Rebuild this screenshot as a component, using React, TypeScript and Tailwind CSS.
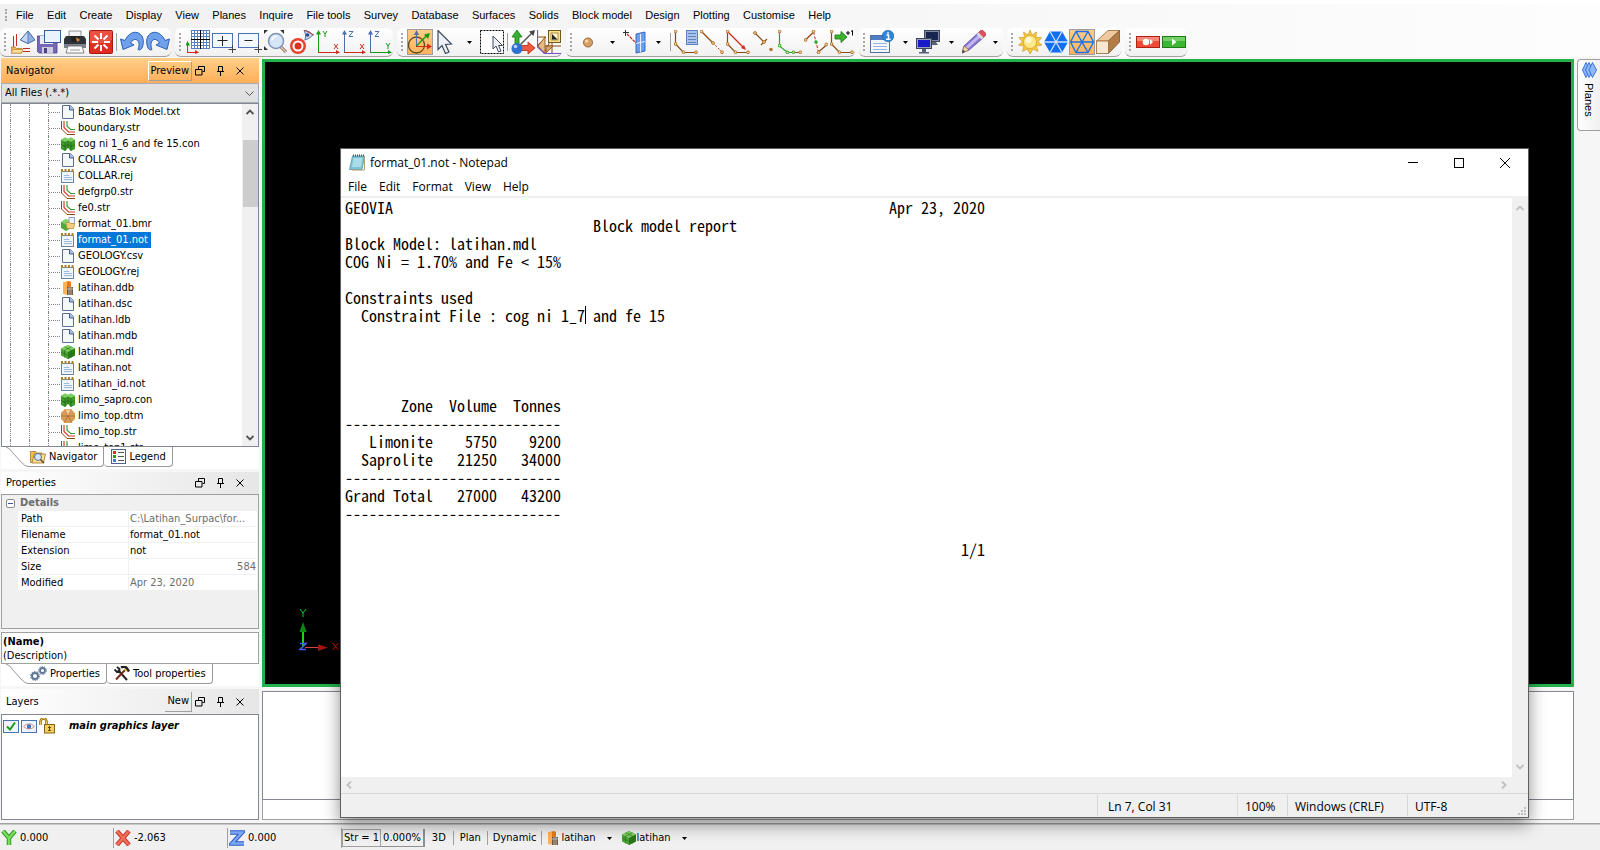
import { useState } from 'react';
import type { ReactNode } from 'react';
import { clsx } from 'clsx';

/* ------------------------------------------------------------------ */
/* Toolbar icons, 24x24                                                */
/* ------------------------------------------------------------------ */

const BROWN = '#8a4b12';

function Dot({ x, y, color = '#b8732c' }: { x: number; y: number; color?: string }) {
  return <circle cx={x} cy={y} r={1.4} fill="#f3d2a4" stroke={color} strokeWidth={1} />;
}

function Axes({ up, right, upColor, rightColor }: { up: string; right: string; upColor: string; rightColor: string }) {
  return (
    <>
      <path d="M2.5 22.500V2" stroke={upColor} fill="none" />
      <path d="M0 4.500L2.500 0L5 4.500z" fill={upColor} />
      <path d="M2 22.500H22" stroke={rightColor} fill="none" />
      <path d="M20 20L24 22.500L20 24z" fill={rightColor} />
      {up === 'Y' ? (
        <path d="M7 1l2 3l2-3M9 4v3" stroke={upColor} fill="none" />
      ) : (
        <path d="M7 1.500h4l-4 5h4" stroke={upColor} fill="none" />
      )}
      {right === 'X' ? (
        <path d="M18 14l4 5M22 14l-4 5" stroke={rightColor} fill="none" />
      ) : (
        <path d="M18 13l2 3l2-3M20 16v3" stroke={rightColor} fill="none" />
      )}
    </>
  );
}

const icons: Record<string, ReactNode> = {
  open: (
    <>
      <path d="M2.500 6v11M5.500 4v12" stroke="#c03020" />
      <path d="M12 18.500h7M12 21.500h7" stroke="#c03020" />
      <path d="M0 17h4l1.500 1.500H11V23H0z" fill="#e9b44a" stroke="#b97f1e" strokeWidth={0.800} />
      <path d="M2 19.500h10L10 23H0z" fill="#ffe09a" stroke="#c08a28" strokeWidth={0.700} />
      <path d="M17 1l7 9l-7 3.500L9.500 10z" fill="#8fb0e0" stroke="#39609f" strokeWidth={0.900} />
      <path d="M17 1v12.500L9.500 10z" fill="#c6d8f3" stroke="#39609f" strokeWidth={0.700} />
    </>
  ),
  save: (
    <>
      <path d="M0 6h18l2 2v15H2l-2-2z" fill="#7768b4" stroke="#51438c" strokeWidth={0.800} />
      <rect x={3} y={6} width={13} height={8} fill="#eceaf6" />
      <rect x={5} y={17} width={11} height={6.500} fill="#cfcbe2" />
      <rect x={7} y={18} width={3} height={5} fill="#4d4380" />
      <rect x={7.500} y={0.500} width={16} height={12} fill="#eaf3fc" stroke="#3a5c9c" />
    </>
  ),
  print: (
    <>
      <path d="M6 1h12v8H6z" fill="#f4f4f4" stroke="#777" strokeWidth={0.800} />
      <path d="M3 6h18l2 3v8H1V9z" fill="#30343a" />
      <path d="M1 14h22v4H1z" fill="#7a828c" />
      <path d="M7 6h10l-2 6H9z" fill="#222" />
      <path d="M13 7l4 3l-3 2z" fill="#e08a3c" />
      <path d="M5 16h14l2 7H3z" fill="#fafafa" stroke="#666" strokeWidth={0.800} />
      <path d="M7 20h10" stroke="#999" />
    </>
  ),
  stop: (
    <>
      <rect x={0.500} y={0.500} width={23} height={23} rx={1} fill="#e02d1e" stroke="#a51a10" />
      <path d="M1 1h22v9q-11 5-22 3z" fill="#f2685a" opacity={0.600} />
      <path
        d="M12 3v6M12 15v6M3 12h6M15 12h6M5.500 5.500l4 4M14.500 14.500l4 4M18.500 5.500l-4 4M9.500 14.500l-4 4"
        stroke="#fff"
        strokeWidth={2}
      />
    </>
  ),
  undo: (
    <path
      d="M0.500 9l4.500 1.500C8 4 13 1.500 17 2.500c6 1.500 8 8.500 5 15.500c-1.500 2-3 2.500-4 1.500c2-5 1-9-2-10c-2-.500-4 1-5.500 3.500L14 15L3 19.500z"
      fill="#6fa0ea"
      stroke="#2c62b8"
    />
  ),
  redo: (
    <path
      d="M23.500 9l-4.500 1.500C16 4 11 1.500 7 2.500c-6 1.500-8 8.500-5 15.500c1.500 2 3 2.500 4 1.500c-2-5-1-9 2-10c2-.500 4 1 5.500 3.500L10 15l11 4.500z"
      fill="#6fa0ea"
      stroke="#2c62b8"
    />
  ),
  grid: (
    <>
      <rect x={5.500} y={0.500} width={18} height={18} fill="#fff" />
      <path
        d="M5.500 0v19M8.500 0v19M11.500 0v19M17.500 0v19M20.500 0v19M23.500 0v19M5 .500h19M5 3.500h19M5 6.500h19M5 12.500h19M5 15.500h19M5 18.500h19"
        stroke="#5a7fc0"
      />
      <path d="M14.500 0v19M5 9.500h19" stroke="#000" />
      <path d="M1.500 22.500V13" stroke="#119a11" />
      <path d="M-.500 15.500L1.500 11L4 15.500z" fill="#119a11" />
      <path d="M1 22.500h9" stroke="#d42a1a" />
      <path d="M9 20L13 22.500L9 24z" fill="#d42a1a" />
    </>
  ),
  zoomIn: (
    <>
      <rect x={0.500} y={3.500} width={20} height={14} fill="#f3f8fd" stroke="#4a73b4" />
      <path d="M10.500 6v10M5.500 10.500h10" stroke="#222" />
      <path d="M20.500 15v8M16.500 19.500h8" stroke="#444" />
    </>
  ),
  zoomOut: (
    <>
      <rect x={0.500} y={3.500} width={20} height={14} fill="#f3f8fd" stroke="#4a73b4" />
      <path d="M6.500 10.500h8" stroke="#222" />
      <path d="M20.500 15v8M16.500 19.500h8" stroke="#444" />
    </>
  ),
  zoomAll: (
    <>
      <path d="M16 16l6 6" stroke="#8a5a3a" strokeWidth={3} />
      <path d="M16 16l6 6" stroke="#d8d0cc" strokeWidth={1.500} />
      <circle cx={12} cy={11} r={7.500} fill="#d5e6f8" stroke="#7e93b4" strokeWidth={1.500} />
      <path d="M8 10q1-4 5-4" stroke="#fff" strokeWidth={1.500} fill="none" />
      <path d="M0 0h4L0 4zM20 0v4L16 0zM0 20v-4l4 4z" fill="#333" />
    </>
  ),
  target: (
    <>
      <circle cx={8} cy={16} r={8} fill="#e8432e" />
      <circle cx={8} cy={16} r={5.500} fill="#fff" />
      <circle cx={8} cy={16} r={3.500} fill="#e0301c" />
      <path d="M14 0Q20 1 23 5Q19 9 15 10Q17 5 14 0z" fill="#c9dcf4" stroke="#54729f" />
      <path d="M14 0l10 5" stroke="#c0392b" />
      <circle cx={17.500} cy={5} r={1.800} fill="#274b8f" />
    </>
  ),
  axesXY: <Axes up="Y" right="X" upColor="#159a15" rightColor="#cc2a1c" />,
  axesXZ: <Axes up="Z" right="X" upColor="#4a6fae" rightColor="#cc2a1c" />,
  axesYZ: <Axes up="Z" right="Y" upColor="#4a6fae" rightColor="#159a15" />,
  orbit: (
    <>
      <circle cx={8.500} cy={15} r={8} fill="none" stroke="#5b4a20" strokeWidth={1.300} />
      <path d="M8.500 16V2" stroke="#4a6fae" />
      <path d="M6 5l2.500-5L11 5z" fill="#4a6fae" />
      <path d="M8.500 16L19 5" stroke="#159a15" strokeWidth={1.300} />
      <path d="M16 4.500L22 3l-2 6z" fill="#159a15" />
      <path d="M8 16.500h12" stroke="#d42a1a" />
      <path d="M19 13.500l5 3l-5 3z" fill="#d42a1a" />
    </>
  ),
  pointer: <path d="M4 .500v19l4-4l3.500 8l3.500-1.500l-3.500-7.500l6-.500z" fill="#eef1f6" stroke="#3d4a60" strokeWidth={1.200} />,
  select: (
    <>
      <rect x={0.500} y={0.500} width={23} height={23} fill="#fff" stroke="#000" strokeDasharray="2 1" />
      <path d="M13 6v13l3-3l2.500 6l2.500-1l-2.500-5.500h4z" fill="#eef1f6" stroke="#3d4a60" />
    </>
  ),
  move3d: (
    <>
      <path d="M8 16L21 3" stroke="#555" strokeWidth={1.500} />
      <path d="M18 1.500L24 0l-1.500 6z" fill="#444" />
      <path d="M4 15V7H1l5-7l5 7H8v8z" fill="#35b02c" stroke="#1a7a14" strokeWidth={0.800} />
      <path d="M9 15.500h8v-3.500l7 6l-7 6V20.500H9z" fill="#f05a3c" stroke="#b02a14" strokeWidth={0.800} />
      <circle cx={6} cy={18.500} r={5.500} fill="#2f6fd0" />
      <circle cx={4.500} cy={16.500} r={1.800} fill="#b8d4fa" />
    </>
  ),
  planeEdit: (
    <>
      <path d="M0 7h9l-9 9zM7 23.500l8-16M0 16h24M15 12v11.500" stroke="#8a4b12" fill="none" />
      <path d="M1 16l7-9v16.500z" fill="#e6b988" stroke={BROWN} strokeWidth={0.800} />
      <path d="M9 16h7l-7 7z" fill="#d9a46c" stroke={BROWN} strokeWidth={0.800} />
      <path d="M.500 0v17l7 6.500H24" stroke="#7a4ed0" strokeWidth={1.200} fill="none" />
      <rect x={11.500} y={0.500} width={12} height={12} fill="#fbe08a" stroke="#6b5a1c" />
      <rect x={14} y={3} width={7} height={7} fill="#fff3c4" stroke="#6b5a1c" strokeWidth={0.600} />
      <path d="M15 4v5.500h5.500z" fill="#222" />
    </>
  ),
  point: (
    <>
      <circle cx={11} cy={12.500} r={4.500} fill="#d9a066" stroke="#9a6430" />
      <circle cx={9.500} cy={11} r={1.600} fill="#f7dcb8" />
    </>
  ),
  digitise: (
    <>
      <path d="M0 2.500h6M2.500 0v6" stroke="#333" />
      <path d="M4 4L14 14" stroke="#cc2a1c" strokeWidth={1.300} strokeDasharray="3 1" />
      <path d="M13 4l9-2v19l-9 2z" fill="#6a9ff0" stroke="#2b60c0" strokeWidth={0.900} />
      <path d="M17.500 4v18M13 13.500l9-2" stroke="#e8f1ff" />
    </>
  ),
  segList: (
    <>
      <path d="M1.500 2v12l8 8.500h12" stroke={BROWN} strokeWidth={1.200} fill="none" />
      <Dot x={1.500} y={1.500} />
      <Dot x={1.500} y={14} />
      <Dot x={9.500} y={22.300} />
      <Dot x={22} y={22.300} />
      <rect x={12.500} y={0.500} width={11} height={14} fill="#a9c3ee" stroke="#5d80c0" />
      <path d="M14 3.500h8M14 6.500h8M14 9.500h8M14 12.500h8" stroke="#45679f" strokeWidth={0.700} />
    </>
  ),
  segExtend: (
    <>
      <path d="M1.500 1.500L13 13" stroke={BROWN} strokeWidth={1.200} />
      <path d="M13 13l9 9" stroke="#cc2a1c" strokeDasharray="2 1.500" />
      <Dot x={1.500} y={1.500} />
      <Dot x={13} y={13} />
      <Dot x={22} y={22.300} />
    </>
  ),
  segClose: (
    <>
      <path d="M1.500 2v12l8 8.500h13" stroke={BROWN} strokeWidth={1.200} fill="none" />
      <path d="M2 2l16 16" stroke="#d42a1a" strokeWidth={1.200} />
      <path d="M20 20l-5-2l3-3z" fill="#d42a1a" />
      <Dot x={1.500} y={1.500} />
      <Dot x={1.500} y={14} />
      <Dot x={9.500} y={22.300} />
      <Dot x={22} y={22.300} />
    </>
  ),
  segBreak: (
    <>
      <path d="M3 3l9 9M9 15l6-6" stroke={BROWN} strokeWidth={1.200} />
      <Dot x={3} y={3} />
      <Dot x={12} y={12} />
      <circle cx={19} cy={19.500} r={1.800} fill="#b8732c" />
    </>
  ),
  segInsert: (
    <>
      <path d="M1.500 2v14l8 6.500h6" stroke="#27a52a" strokeWidth={1.200} fill="none" />
      <path d="M15 22.500h7" stroke={BROWN} />
      <Dot x={1.500} y={1.500} color="#b8732c" />
      <Dot x={1.500} y={15.500} color="#27a52a" />
      <Dot x={9.500} y={22.300} color="#27a52a" />
      <Dot x={15.500} y={22.300} color="#27a52a" />
      <Dot x={22.300} y={22.300} />
    </>
  ),
  segMove: (
    <>
      <path d="M1.500 10l8-8M14.500 22l8-7" stroke={BROWN} strokeWidth={1.200} />
      <path d="M9.500 2l5 20" stroke="#d42a1a" strokeDasharray="3 1.500" />
      <Dot x={1.500} y={10} />
      <Dot x={9.500} y={1.500} />
      <Dot x={14.500} y={22.300} />
      <Dot x={22.300} y={14.500} />
      <circle cx={12} cy={12} r={1.700} fill="#27a52a" />
    </>
  ),
  segNext: (
    <>
      <path d="M1.500 2v12l8 8.500h13" stroke={BROWN} strokeWidth={1.200} fill="none" />
      <Dot x={1.500} y={1.500} />
      <Dot x={1.500} y={14} />
      <Dot x={9.500} y={22.300} />
      <Dot x={22} y={22.300} />
      <path d="M5 5h6V1.500L17 7l-6 5.500V9H5z" fill="#3cb42f" stroke="#1f7c18" strokeWidth={0.900} />
      <path d="M16 3h4M18 1v4M21 1.500l1.500-1v5" stroke="#000" fill="none" />
    </>
  ),
  info: (
    <>
      <rect x={0.500} y={5.500} width={19} height={17} fill="#f5f9fe" stroke="#52719f" />
      <rect x={1} y={6} width={18} height={4} fill="#4f7cc4" />
      <path d="M3 13.500h14M3 16.500h14M3 19.500h14" stroke="#9bb4d8" />
      <circle cx={18} cy={6} r={5.800} fill="#2b86d8" stroke="#1a5ca0" strokeWidth={0.600} />
      <path d="M16.500 5h2v4M16 9.200h4.500M18 2v1.800" stroke="#fff" strokeWidth={1.400} fill="none" />
    </>
  ),
  monitors: (
    <>
      <rect x={8.500} y={0.500} width={15} height={11} fill="#8089a0" stroke="#3d4560" />
      <rect x={10} y={2} width={12} height={8} fill="#1a2450" />
      <path d="M15 12h5l2 3h-8z" fill="#59617a" />
      <rect x={0.500} y={8.500} width={15} height={10} fill="#9aa2b8" stroke="#3d4560" />
      <rect x={2} y={10} width={12} height={7} fill="#1a1ac8" />
      <path d="M6 19h4v3h3v1.500H3V22h3z" fill="#59617a" />
    </>
  ),
  pencil: (
    <>
      <path d="M0 23l2-7L16 3l5 5L7 20z" fill="#8f7ad8" stroke="#4d3d92" strokeWidth={0.800} />
      <path d="M3.500 17L17 4.500l2 2L6 18.500z" fill="#c4b8f2" />
      <path d="M0 23l2-7l5 4z" fill="#f2d6a6" stroke="#8a6a3a" strokeWidth={0.600} />
      <path d="M0 23l1-3l2 1.500z" fill="#333" />
      <path d="M16 3l2.500-2.500h2.500L24 3.500V5l-3 3z" fill="#e0505c" stroke="#a02a38" strokeWidth={0.600} />
      <path d="M14.500 4.500L16.500 2.500l5 5l-2 2z" fill="#d8d8e0" />
    </>
  ),
  sun: (
    <>
      <path
        d="M12 0l2 5l4.500-3l-.500 5.500l5.500 0l-3.500 4.500l4 3l-5.500 1l1.500 5.500l-5-2.500L12 24l-2.500-5l-5 2.500L6 16L.500 15l4-3L1 7.500h5.500L5.500 2l4.500 3z"
        fill="#f5c93c"
        stroke="#c79418"
        strokeWidth={0.600}
      />
      <circle cx={12} cy={12} r={6.500} fill="#ffe98c" stroke="#d6a527" strokeWidth={0.800} />
      <circle cx={10.500} cy={10} r={3} fill="#fff8d8" />
    </>
  ),
  hexSolid: (
    <>
      <path d="M6 1.500h12l6 10.500l-6 10.500H6L0 12z" fill="#0f6ff0" />
      <path d="M0 12h24M6 1.500l12 21M18 1.500l-12 21" stroke="#cfe2ff" strokeWidth={1.300} />
    </>
  ),
  hexWire: (
    <path
      d="M6 1.500h12l5.500 10.500l-5.500 10.500H6L.500 12zM.500 12h23M6 1.500l12 21M18 1.500l-12 21"
      fill="none"
      stroke="#1a72ea"
      strokeWidth={1.400}
    />
  ),
  box3d: (
    <>
      <path d="M.500 11L12 .500h11.500L12.500 11z" fill="#ecc99e" stroke="#9b6a38" strokeWidth={0.800} />
      <path d="M12.500 11L23.500 .500V12L12.500 23.500z" fill="#b37c45" stroke="#7d5226" strokeWidth={0.800} />
      <rect x={0.500} y={11} width={12} height={12.500} fill="#f7e6d2" stroke="#9b6a38" strokeWidth={0.800} />
    </>
  ),
  record: (
    <>
      <rect x={0.500} y={6.500} width={23} height={11} fill="#ee4a35" stroke="#b02014" />
      <rect x={1} y={7} width={22} height={4} fill="#f58a78" />
      <circle cx={10} cy={12} r={3.300} fill="#fff" />
      <path d="M14 9l3 3l-3 3z" fill="#fff" />
    </>
  ),
  play: (
    <>
      <rect x={0.500} y={6.500} width={23} height={11} fill="#3fb534" stroke="#1f7c18" />
      <rect x={1} y={7} width={22} height={4} fill="#74d066" />
      <path d="M10 8.500l4.500 3.500l-4.500 3.500z" fill="#fff" />
    </>
  ),
};

/* ------------------------------------------------------------------ */
/* File icons, 14x14                                                   */
/* ------------------------------------------------------------------ */

const fileIcons: Record<string, ReactNode> = {
  doc: (
    <>
      <path d="M1.500 .500h8l3 3.500v9.500h-11z" fill="#f4f8fd" stroke="#5a6f92" />
      <path d="M8.500 .500V5h4" fill="#9fb9df" stroke="#44618f" />
    </>
  ),
  str: (
    <>
      <path d="M.500 0v8l5.500 5.500h8" stroke="#8a4b12" fill="none" />
      <path d="M3 0v6.500l4.500 4.500H14" stroke="#d43a2a" strokeWidth={1.200} fill="none" />
      <path d="M6 0v5l3.500 3.500H14" stroke="#35a035" strokeWidth={1.200} fill="none" />
    </>
  ),
  con: (
    <>
      <path d="M0 3l4-2.500L7 2l3-1.500L14 3v9l-4 2l-3-3l-3 3l-4-2z" fill="#3f9a2c" />
      <path d="M0 3l4-2.500L7 2l3-1.500L14 3l-4 1.800L7 3.500L4 4.800z" fill="#7fd062" />
      <path d="M4 5v9M10 5v9M7 4v7M0 7.500l4 2l3-2l3 2l4-2" stroke="#22661a" strokeWidth={0.800} fill="none" />
    </>
  ),
  note: (
    <>
      <rect x={0.500} y={2.500} width={12} height={11} fill="#eef4fb" stroke="#6c84a8" />
      <path d="M0 1.500h13" stroke="#a8842c" strokeWidth={3} strokeDasharray="2 1.500" />
      <path d="M3 6.500h5M3 8.500h8M3 10.500h8" stroke="#a3b9dc" />
    </>
  ),
  bmr: (
    <>
      <path d="M0 5l5-3l5 3v6l-5 3l-5-3z" fill="#4fa83a" />
      <path d="M0 5l5-3l5 3l-5 2.500z" fill="#86d36c" />
      <rect x={8} y={0.500} width={5.500} height={6} fill="#eef4fb" stroke="#7890b4" strokeWidth={0.800} />
      <path d="M5 5.500h3.500l1 1H14l-1.500 5H6z" fill="#f2cf7c" stroke="#b98c34" strokeWidth={0.700} />
    </>
  ),
  ddb: (
    <>
      <path d="M2 1.500l6-1.500l2 1v11l-6 1.500l-2-1z" fill="#e87818" />
      <path d="M2 1.500l4-1v12L4 13.500l-2-1z" fill="#ffb254" />
      <rect x={6} y={6} width={6} height={8} fill="#6b5a4a" />
      <path d="M8 6v8M10 6v8M6 8h6" stroke="#d4c4b0" strokeWidth={0.800} />
    </>
  ),
  mdl: (
    <>
      <path d="M0 3.500L7 0l7 3.500v7L7 14L0 10.500z" fill="#4aa535" />
      <path d="M0 3.500L7 0l7 3.500L7 7z" fill="#7fd062" />
      <path d="M7 7l7-3.500v7L7 14z" fill="#2b7a1e" />
      <path d="M0 7l7 3.500L14 7M3.500 5v7.500M10.500 5v7.500M3.500 1.800l7 3.500M10.500 1.800l-7 3.500" stroke="#256b1a" strokeWidth={0.600} fill="none" />
    </>
  ),
  dtm: (
    <>
      <path d="M4 0h6l4 4v6l-4 4H4l-4-4V4z" fill="#d99a56" />
      <path d="M4 0l3 7l3-7M0 7h14M3 14l4-7l4 7" stroke="#9a602a" strokeWidth={0.600} fill="none" />
      <path d="M4 .500l3 6l3-6z" fill="#f0c896" />
    </>
  ),
};

function FileIcon({ name, className }: { name: string; className?: string }) {
  return (
    <svg viewBox="0 0 14 14" className={clsx('size-3.5 shrink-0', className)} aria-hidden>
      {fileIcons[name]}
    </svg>
  );
}

/* ------------------------------------------------------------------ */
/* Data                                                                */
/* ------------------------------------------------------------------ */

const menus = [
  'File', 'Edit', 'Create', 'Display', 'View', 'Planes', 'Inquire', 'File tools', 'Survey',
  'Database', 'Surfaces', 'Solids', 'Block model', 'Design', 'Plotting', 'Customise', 'Help',
];

// '|' is a separator, 'v' a drop-down arrow; everything else is an icon name.
const toolbars: string[][] = [
  ['open', 'save', 'print', 'stop', '|', 'undo', 'redo'],
  ['grid', 'zoomIn', 'zoomOut', 'zoomAll', 'target', 'axesXY', 'axesXZ', 'axesYZ'],
  ['orbit', 'pointer', 'v', 'select', '|', 'move3d', 'planeEdit'],
  ['point', 'v', 'digitise', 'v', '|', 'segList', 'segExtend', 'segClose', 'segBreak', 'segInsert', 'segMove', 'segNext'],
  ['info', 'v', 'monitors', 'v', 'pencil', 'v'],
  ['sun', 'hexSolid', 'hexWire', 'box3d'],
  ['record', 'play'],
];

const activeTools = ['orbit', 'hexWire'];

const files: [string, string][] = [
  ['doc', 'Batas Blok Model.txt'],
  ['str', 'boundary.str'],
  ['con', 'cog ni 1_6 and fe 15.con'],
  ['doc', 'COLLAR.csv'],
  ['note', 'COLLAR.rej'],
  ['str', 'defgrp0.str'],
  ['str', 'fe0.str'],
  ['bmr', 'format_01.bmr'],
  ['note', 'format_01.not'],
  ['doc', 'GEOLOGY.csv'],
  ['note', 'GEOLOGY.rej'],
  ['ddb', 'latihan.ddb'],
  ['doc', 'latihan.dsc'],
  ['doc', 'latihan.ldb'],
  ['doc', 'latihan.mdb'],
  ['mdl', 'latihan.mdl'],
  ['note', 'latihan.not'],
  ['note', 'latihan_id.not'],
  ['con', 'limo_sapro.con'],
  ['dtm', 'limo_top.dtm'],
  ['str', 'limo_top.str'],
  ['str', 'limo_top1.str'],
];

const properties = [
  { name: 'Path', value: 'C:\\Latihan_Surpac\\for...', muted: true },
  { name: 'Filename', value: 'format_01.not' },
  { name: 'Extension', value: 'not' },
  { name: 'Size', value: '584', muted: true, right: true },
  { name: 'Modified', value: 'Apr 23, 2020', muted: true },
];

const RULE = '-'.repeat(27);

const report = [
  'GEOVIA' + ' '.repeat(62) + 'Apr 23, 2020',
  ' '.repeat(31) + 'Block model report',
  'Block Model: latihan.mdl',
  'COG Ni = 1.70% and Fe < 15%',
  '',
  'Constraints used',
  '  Constraint File : cog ni 1_7 and fe 15',
  '',
  '',
  '',
  '',
  '       Zone  Volume  Tonnes',
  RULE,
  '   Limonite    5750    9200',
  '  Saprolite   21250   34000',
  RULE,
  'Grand Total   27000   43200',
  RULE,
  '',
  ' '.repeat(77) + '1/1',
].join('\n');

/* ------------------------------------------------------------------ */
/* Top bars                                                            */
/* ------------------------------------------------------------------ */

function Grip({ className }: { className?: string }) {
  return <span className={clsx('w-0.5 shrink-0 border-l-2 border-dotted border-[#a8a8a8]', className)} />;
}

function MenuBar() {
  return (
    <nav className="mt-1 flex h-6 items-center bg-linear-to-r from-[#f0f0f0] to-[#fdfdfd] pb-0.5 pl-[5px] font-['Liberation_Sans',sans-serif] text-[11px]">
      <Grip className="h-3" />
      <div className="ml-[9px] flex w-[815px] items-center justify-between">
        {menus.map((m) => (
          <button key={m} type="button" className="whitespace-nowrap">
            {m}
          </button>
        ))}
      </div>
    </nav>
  );
}

function ToolBars() {
  return (
    <div className="flex h-[29px] items-start gap-1 overflow-hidden bg-linear-to-r from-[#f0f0f0] to-[#fdfdfd]">
      {toolbars.map((items) => (
        <div
          key={items[0]}
          className="flex h-[29px] shrink-0 items-center rounded-md border-b border-[#a0a0a0] bg-linear-to-b from-white to-[#f1f1f1] pl-1"
        >
          <Grip className="mr-1 h-[18px]" />
          {items.map((item, i) => {
            if (item === '|') return <span key={i} className="mx-0.5 h-[18px] w-px bg-[#a0a0a0]" />;
            if (item === 'v') {
              return (
                <button key={i} type="button" aria-label="More" className="flex h-[26px] w-5 items-center justify-center last:w-4">
                  <svg viewBox="0 0 5 3" className="h-[3px] w-[5px]">
                    <path d="M0 0h5L2.500 3z" />
                  </svg>
                </button>
              );
            }
            return (
              <button
                key={i}
                type="button"
                aria-label={item}
                className={clsx(
                  'flex size-[26px] items-center justify-center',
                  activeTools.includes(item) && 'border border-[#9d9d9d] bg-linear-to-b from-[#ffcd85] to-[#ffb25e]',
                )}
              >
                <svg viewBox="0 0 24 24" className="size-6 shrink-0">
                  {icons[item]}
                </svg>
              </button>
            );
          })}
        </div>
      ))}
    </div>
  );
}

/* ------------------------------------------------------------------ */
/* Left dock                                                           */
/* ------------------------------------------------------------------ */

function PanelHeader({ title, action, active, className }: { title: string; action?: string; active?: boolean; className: string }) {
  return (
    <header
      className={clsx(
        'flex shrink-0 items-center pr-[15px] pl-[5px]',
        active ? 'bg-linear-to-b from-[#ffcf88] to-[#ffae58]' : 'bg-linear-to-r from-white to-[#e6e6e6]',
        className,
      )}
    >
      <h2 className="flex-1">{title}</h2>
      {action && (
        <button
          type="button"
          className={clsx('h-5 border-r border-b border-[#a0a0a0] px-0.5', active && 'border-t border-l border-t-white border-l-white')}
        >
          {action}
        </button>
      )}
      <button type="button" aria-label="Float" className="ml-[3px]">
        <svg viewBox="0 0 10 10" className="size-2.5" fill="none" stroke="#000">
          <path d="M3.500 3V.500h6v5H7.500M.500 3.500h6.500v5.500H.500z" />
        </svg>
      </button>
      <button type="button" aria-label="Pin" className="ml-3">
        <svg viewBox="0 0 7 10" className="h-2.5 w-[7px]" fill="none" stroke="#000">
          <path d="M1.500 5.500v-5h4v5M0 5.500h7M3.500 6v4" />
        </svg>
      </button>
      <button type="button" aria-label="Close" className="ml-3">
        <svg viewBox="0 0 8 8" className="size-2" fill="none" stroke="#000">
          <path d="M.500 .500l7 7M7.500 .500l-7 7" />
        </svg>
      </button>
    </header>
  );
}

function PanelTab({ label, first, children }: { label: string; first?: boolean; children: ReactNode }) {
  return (
    <button type="button" role="tab" aria-selected={!!first} className="flex h-5 items-stretch">
      {first && (
        <svg viewBox="0 0 22 20" className="h-5 w-[22px]" fill="none" stroke="#9a9a9a">
          <path d="M0 0q4 1 7 6l8 9q4 4.500 7 4.500" />
        </svg>
      )}
      <span
        className={clsx(
          'flex items-center gap-[3px] rounded-br border-r border-b border-[#9a9a9a] pr-1.5 whitespace-nowrap',
          first ? 'pl-0.5' : 'rounded-bl pl-[7px]',
        )}
      >
        {children}
        {label}
      </span>
    </button>
  );
}

function Chevron({ className, d }: { className?: string; d: string }) {
  return (
    <svg viewBox="0 0 8 8" className={clsx('size-2', className)} fill="none" stroke="currentColor" strokeWidth={1.800}>
      <path d={d} />
    </svg>
  );
}

const UP = 'M.500 6L4 2.500L7.500 6';
const DOWN = 'M.500 2L4 5.500L7.500 2';
const LEFT = 'M6 .500L2.500 4L6 7.500';
const RIGHT = 'M2 .500L5.500 4L2 7.500';

function NavigatorPanel() {
  const [selected, setSelected] = useState('format_01.not');

  return (
    <section className="flex min-h-0 flex-1 flex-col">
      <PanelHeader title="Navigator" action="Preview" active className="h-[25px]" />
      <div className="relative shrink-0">
        <select
          aria-label="File filter"
          className="block h-5 w-full appearance-none border border-[#a7abb3] bg-[#e1e1e1] px-[3px]"
        >
          <option>All Files (.*.*)</option>
        </select>
        <svg viewBox="0 0 9 6" className="pointer-events-none absolute top-2 right-[5px] h-1.5 w-[9px]" fill="none" stroke="#555">
          <path d="M.500 .500l4 4l4-4" />
        </svg>
      </div>
      <div className="flex min-h-0 flex-1 border border-[#828790] bg-white">
        <ul className="min-h-0 flex-1 overflow-hidden">
          {files.map(([icon, name]) => (
            <li key={name} className="flex h-4 items-center pl-2">
              <span className="h-4 w-[19px] border-l border-dotted border-[#808080]" />
              <span className="h-4 w-[19px] border-l border-dotted border-[#808080]" />
              <span className="flex h-4 w-3 items-center border-l border-dotted border-[#808080]">
                <span className="w-full border-t border-dotted border-[#808080]" />
              </span>
              <FileIcon name={icon} className="mx-px" />
              <button
                type="button"
                onClick={() => setSelected(name)}
                className={clsx('ml-px h-4 pr-[3px] pl-px leading-4 whitespace-nowrap', name === selected && 'bg-[#0078d7] text-white')}
              >
                {name}
              </button>
            </li>
          ))}
        </ul>
        <div className="flex w-4 flex-col items-center bg-[#f0f0f0] py-1 text-[#505050]">
          <Chevron d={UP} />
          <div className="mt-6 h-[67px] w-[15px] bg-[#cdcdcd]" />
          <Chevron d={DOWN} className="mt-auto" />
        </div>
      </div>
      <div role="tablist" className="flex h-[22px] shrink-0 items-start bg-white pl-[5px]">
        <PanelTab label="Navigator" first>
          <svg viewBox="0 0 16 14" className="h-3.5 w-4">
            <path d="M.500 1.500h5l1 1.500H12v9.500H.500z" fill="#f2c04c" stroke="#a5752a" strokeWidth={0.800} />
            <path d="M4 4h11.500l-2 9H2z" fill="#ffdf8a" stroke="#a5752a" strokeWidth={0.800} />
            <circle cx={8} cy={7} r={3.500} fill="#d0e6fb" stroke="#5a7396" />
            <path d="M10.500 9.500l3.500 3.500" stroke="#5a4636" strokeWidth={1.500} />
          </svg>
        </PanelTab>
        <PanelTab label="Legend">
          <svg viewBox="0 0 15 15" className="size-[15px]">
            <rect x={0.500} y={0.500} width={14} height={14} fill="#fff" stroke="#51647f" />
            <rect x={2} y={2} width={3} height={3} fill="#d83020" />
            <rect x={2} y={6} width={3} height={3} fill="#28a028" />
            <rect x={2} y={10} width={3} height={3} fill="#3a80e0" />
            <path d="M7 3.500h6M7 7.500h6M7 11.500h6" stroke="#555" />
          </svg>
        </PanelTab>
      </div>
    </section>
  );
}

function PropertiesPanel() {
  return (
    <section className="mt-[3px] flex shrink-0 flex-col">
      <PanelHeader title="Properties" className="h-[22px]" />
      <div className="h-[135px] border border-[#a0a0a0] bg-[#f0f0f0]">
        <table className="w-full table-fixed border-separate border-spacing-0">
          <colgroup>
            <col className="w-4" />
            <col className="w-[111px]" />
            <col />
          </colgroup>
          <tbody>
            <tr>
              <td className="h-4 p-0 pl-1">
                <button type="button" aria-label="Collapse" className="flex size-[9px] items-center justify-center rounded-[2px] border border-[#8c8c8c] bg-white">
                  <span className="block h-px w-[5px] bg-[#3b56a5]" />
                </button>
              </td>
              <th colSpan={2} className="p-0 pl-0.5 text-left leading-4 font-bold text-[#6d6d6d]">
                Details
              </th>
            </tr>
            {properties.map((p) => (
              <tr key={p.name}>
                <td className="p-0" />
                <th className="h-4 border-r border-b border-[#f0f0f0] bg-white p-0 pl-[3px] text-left leading-[15px] font-normal">{p.name}</th>
                <td
                  className={clsx(
                    'overflow-hidden border-r border-b border-[#f0f0f0] bg-white p-0 leading-[15px] whitespace-nowrap',
                    p.muted && 'text-[#6d6d6d]',
                    p.right ? 'pr-px text-right' : 'pl-px',
                  )}
                >
                  {p.value}
                </td>
              </tr>
            ))}
          </tbody>
        </table>
      </div>
      <div className="mt-[3px] h-8 border border-[#a0a0a0] bg-white pt-0.5 pl-px leading-[14px]">
        <p className="font-bold">(Name)</p>
        <p>(Description)</p>
      </div>
      <div role="tablist" className="flex h-[22px] items-start bg-white pl-[5px]">
        <PanelTab label="Properties" first>
          <svg viewBox="0 0 17 15" className="h-[15px] w-[17px]" fill="none" stroke="#5f7694">
            <circle cx={5} cy={10} r={3} strokeWidth={2} />
            <circle cx={5} cy={10} r={4.500} strokeDasharray="1.500 1.300" />
            <circle cx={12.500} cy={4.500} r={2.500} strokeWidth={1.800} />
            <circle cx={12.500} cy={4.500} r={4} strokeDasharray="1.300 1.200" />
          </svg>
        </PanelTab>
        <PanelTab label="Tool properties">
          <svg viewBox="0 0 16 15" className="h-[15px] w-4" fill="none">
            <path d="M4 4l9 10" stroke="#222" strokeWidth={2} />
            <path d="M2 13.500L11 4" stroke="#7a2a1a" strokeWidth={2} />
            <path d="M.500 3.500L3 6h2.500V3L3 1" stroke="#222" strokeWidth={1.800} />
            <path d="M7 1.500q4-2 6 1l2 3" stroke="#222" strokeWidth={2.500} />
            <path d="M10 3l3 2" stroke="#e0c030" strokeWidth={1.500} />
          </svg>
        </PanelTab>
      </div>
    </section>
  );
}

function LayersPanel() {
  return (
    <section className="mt-[3px] flex shrink-0 flex-col">
      <PanelHeader title="Layers" action="New" className="h-[25px]" />
      <div className="h-[106px] border border-[#828790] bg-white">
        <div className="flex h-[22px] items-center gap-0.5 pl-px">
          <label className="relative block h-[13px] w-4">
            <input type="checkbox" defaultChecked aria-label="Active layer" className="block h-[13px] w-4 appearance-none border border-[#4a73b4] bg-[#eef5fc]" />
            <svg viewBox="0 0 16 13" className="pointer-events-none absolute inset-0" fill="none" stroke="#1a9a1a" strokeWidth={2}>
              <path d="M4 6.500l3 3l5-7" />
            </svg>
          </label>
          <button type="button" aria-label="Visible" className="h-[13px] w-4 border border-[#4a73b4] bg-[#eef5fc]">
            <svg viewBox="0 0 14 11" className="h-[11px] w-3.5">
              <path d="M1.500 5.500Q7 0 12.500 5.500Q7 10.500 1.500 5.500z" fill="#fff" stroke="#d08a80" />
              <circle cx={7} cy={5.500} r={2.200} fill="#3f72c4" />
            </svg>
          </button>
          <button type="button" aria-label="Unlocked">
            <svg viewBox="0 0 16 16" className="size-4">
              <path d="M1.500 7V3.500a2.500 2.500 0 0 1 6 0V6" fill="none" stroke="#8a6410" strokeWidth={2.500} />
              <path d="M1.500 7V3.500a2.500 2.500 0 0 1 6 0V6" fill="none" stroke="#f0cc58" />
              <rect x={5.500} y={6.500} width={10} height={8.500} fill="#f3cf60" stroke="#8a6410" />
              <path d="M10.500 8v5M9 9.500h3M9 12.500h3" stroke="#6b4c08" />
            </svg>
          </button>
          <span className="pl-3 font-bold italic">main graphics layer</span>
        </div>
      </div>
    </section>
  );
}

/* ------------------------------------------------------------------ */
/* Notepad window                                                      */
/* ------------------------------------------------------------------ */

function Notepad() {
  return (
    <section className="absolute top-[90px] right-[45px] bottom-0.5 left-[78px] flex flex-col border border-[#5f5f5f] bg-white font-['Open_Sans','Noto_Sans',sans-serif] text-[12px] shadow-[0_6px_16px_rgba(0,0,0,0.45)]">
      <header className="flex h-[27px] shrink-0 items-center pl-2">
        <svg viewBox="0 0 17 17" className="size-[17px]">
          <path d="M3.500 2h12L13 15.500H.500z" fill="#7cc4d6" stroke="#4b8ea2" strokeWidth={0.700} />
          <path d="M4.500 4h9l-1.500 9H3z" fill="#a9dde8" />
          <path d="M15.500 2v14H3" fill="none" stroke="#b09a78" />
          <path d="M4 1.500h11" stroke="#555" strokeWidth={2} strokeDasharray="1 1" />
        </svg>
        <h1 className="flex-1 pt-px pl-1">format_01.not - Notepad</h1>
        <button type="button" aria-label="Minimize" className="flex h-[27px] w-[46px] items-center justify-center">
          <span className="h-px w-2.5 bg-black" />
        </button>
        <button type="button" aria-label="Maximize" className="flex h-[27px] w-[46px] items-center justify-center">
          <span className="size-2.5 border border-black" />
        </button>
        <button type="button" aria-label="Close" className="flex h-[27px] w-[46px] items-center justify-center">
          <svg viewBox="0 0 10 10" className="size-2.5" stroke="#000">
            <path d="M0 0l10 10M10 0L0 10" />
          </svg>
        </button>
      </header>
      <nav className="flex h-[22px] shrink-0 items-end gap-3 border-b-2 border-[#f0f0f0] pb-0.5 pl-[7px]">
        {['File', 'Edit', 'Format', 'View', 'Help'].map((m) => (
          <button key={m} type="button">
            {m}
          </button>
        ))}
      </nav>
      <div className="flex min-h-0 flex-1">
        <div className="relative min-w-0 flex-1">
          <textarea
            aria-label="Document text"
            defaultValue={report}
            spellCheck={false}
            wrap="off"
            className="block size-full resize-none overflow-hidden pl-1 font-['Noto_Sans_Mono_CJK_SC','Liberation_Mono',monospace] text-[16px] leading-[18px] outline-none"
          />
          {/* insertion caret, line 7 */}
          <span className="absolute top-[108px] left-[244px] h-[18px] w-px bg-black" />
        </div>
        <div className="flex w-4 flex-col items-center justify-between bg-[#f0f0f0] py-1.5 text-[#bfbfbf]">
          <Chevron d={UP} />
          <Chevron d={DOWN} />
        </div>
      </div>
      <div className="flex h-4 shrink-0 items-center justify-between bg-[#f0f0f0] pr-5 pl-1 text-[#bfbfbf]">
        <Chevron d={LEFT} />
        <Chevron d={RIGHT} />
      </div>
      <footer className="flex h-6 shrink-0 items-stretch justify-end border-t border-[#d7d7d7] bg-[#f0f0f0] py-px leading-[23px]">
        <span className="w-[140px] border-l border-[#d7d7d7] pl-2.5">Ln 7, Col 31</span>
        <span className="w-[50px] border-l border-[#d7d7d7] pl-[7px]">100%</span>
        <span className="w-[120px] border-l border-[#d7d7d7] pl-[7px]">Windows (CRLF)</span>
        <span className="flex w-[121px] justify-between border-l border-[#d7d7d7] pl-[7px]">
          UTF-8
          <svg viewBox="0 0 8 8" className="mr-0.5 mb-px size-2 self-end" fill="#bfbfbf">
            <path d="M6 0h2v2H6zM3 3h2v2H3zM6 3h2v2H6zM0 6h2v2H0zM3 6h2v2H3zM6 6h2v2H6z" />
          </svg>
        </span>
      </footer>
    </section>
  );
}

/* ------------------------------------------------------------------ */
/* Workspace and status bar                                            */
/* ------------------------------------------------------------------ */

function Workspace() {
  return (
    <main className="relative flex min-w-0 flex-1 flex-col pt-px">
      <div className="flex flex-1 flex-col justify-end border-[3px] border-[#22b14c] bg-black pb-[30px] pl-[31px]">
        <svg viewBox="0 0 46 46" className="h-[46px] w-[46px]" fill="none">
          <path d="M4 1l3 4l3-4M7 5v4" stroke="#00d020" />
          <path d="M7 22v16" stroke="#20d020" strokeWidth={2} />
          <path d="M7 14l3.500 10h-7z" fill="#0a8a14" />
          <path d="M9 39.500h14" stroke="#e04040" />
          <path d="M22 36.500L32 39.500l-10 3.500z" fill="#a81212" />
          <path d="M4 35.500h6l-6 6h6" stroke="#4a5cf0" strokeWidth={1.500} />
          <path d="M36.500 35l6 7M42.500 35l-6 7" stroke="#e01010" />
        </svg>
      </div>
      <div className="mt-1 h-[109px] border border-[#828790] bg-white" />
      <div className="h-5 border border-t-0 border-[#a0a0a0] bg-white" />
      <Notepad />
    </main>
  );
}

function Coordinate({ letter, color, fill, value }: { letter: string; color: string; fill: string; value: string }) {
  return (
    <div className="flex w-[114px] items-center gap-[3px] border-r border-[#a0a0a0] pl-px">
      <svg viewBox="0 0 16 16" className="size-4" fill="none">
        <path d={letter} stroke={color} strokeWidth={4.500} />
        <path d={letter} stroke={fill} strokeWidth={2.500} />
      </svg>
      {value}
    </div>
  );
}

function StatusBar() {
  return (
    <footer className="flex h-[27px] shrink-0 items-center border-t border-[#a0a0a0] bg-[#f0f0f0] pt-0.5 shadow-[inset_0_1px_0_#c8c8c8]">
      <div className="flex h-5 items-stretch">
        <Coordinate letter="M2 1l6 7l6-7M8 7v8" color="#2c9a1e" fill="#7ade5c" value="0.000" />
        <Coordinate letter="M2 1l12 14M14 1L2 15" color="#c83a2a" fill="#f0705c" value="-2.063" />
        <Coordinate letter="M1 2.500h12L3 13.500h12" color="#2c5ac8" fill="#7aa6f4" value="0.000" />
      </div>
      <button type="button" className="h-[18px] border border-[#a0a0a0] px-px">
        Str = 1
      </button>
      <button type="button" className="h-[18px] border-r-2 border-b border-[#909090] px-0.5">
        0.000%
      </button>
      <div className="flex h-3.5 items-center divide-x divide-[#a0a0a0]">
        <button type="button" className="px-[7px]">3D</button>
        <button type="button" className="px-1.5">Plan</button>
        <button type="button" className="px-[5px]">Dynamic</button>
        <button type="button" className="flex items-center gap-px pl-1">
          <FileIcon name="ddb" />
          latihan
          <svg viewBox="0 0 5 3" className="mx-2.5 h-[3px] w-[5px]"><path d="M0 0h5L2.500 3z" /></svg>
        </button>
      </div>
      <button type="button" className="flex items-center gap-px">
        <FileIcon name="mdl" />
        latihan
        <svg viewBox="0 0 5 3" className="mx-2.5 h-[3px] w-[5px]"><path d="M0 0h5L2.500 3z" /></svg>
      </button>
    </footer>
  );
}

export default function App() {
  return (
    <div className="flex h-screen flex-col overflow-hidden bg-white font-['DejaVu_Sans_Condensed','Noto_Sans',sans-serif] text-[11px] leading-[14px] text-black">
      <MenuBar />
      <ToolBars />
      <div className="flex min-h-0 flex-1 gap-[3px] bg-[#f6f6f6] pt-px pb-[3px] pl-px">
        <aside className="flex w-[258px] shrink-0 flex-col">
          <NavigatorPanel />
          <PropertiesPanel />
          <LayersPanel />
        </aside>
        <Workspace />
        <aside className="w-[23px] shrink-0 pt-px">
          <button
            type="button"
            className="flex h-[72px] w-full flex-col items-center gap-[5px] rounded-l border border-r-0 border-[#a0a0a0] bg-linear-to-r from-white to-[#f0f0f0] pt-0.5 font-['Liberation_Sans',sans-serif]"
          >
            <svg viewBox="0 0 15 16" className="h-4 w-[15px]" stroke="#3a72d8" fill="#8fb8f6">
              <path d="M4 .500L8 8L4 15.500L.500 8z" />
              <path d="M7 .500L11 8L7 15.500L3.500 8z" />
              <path d="M10.500 .500L14.500 8L10.500 15.500L7 8z" />
            </svg>
            <span className="[writing-mode:vertical-rl]">Planes</span>
          </button>
        </aside>
      </div>
      <StatusBar />
    </div>
  );
}
